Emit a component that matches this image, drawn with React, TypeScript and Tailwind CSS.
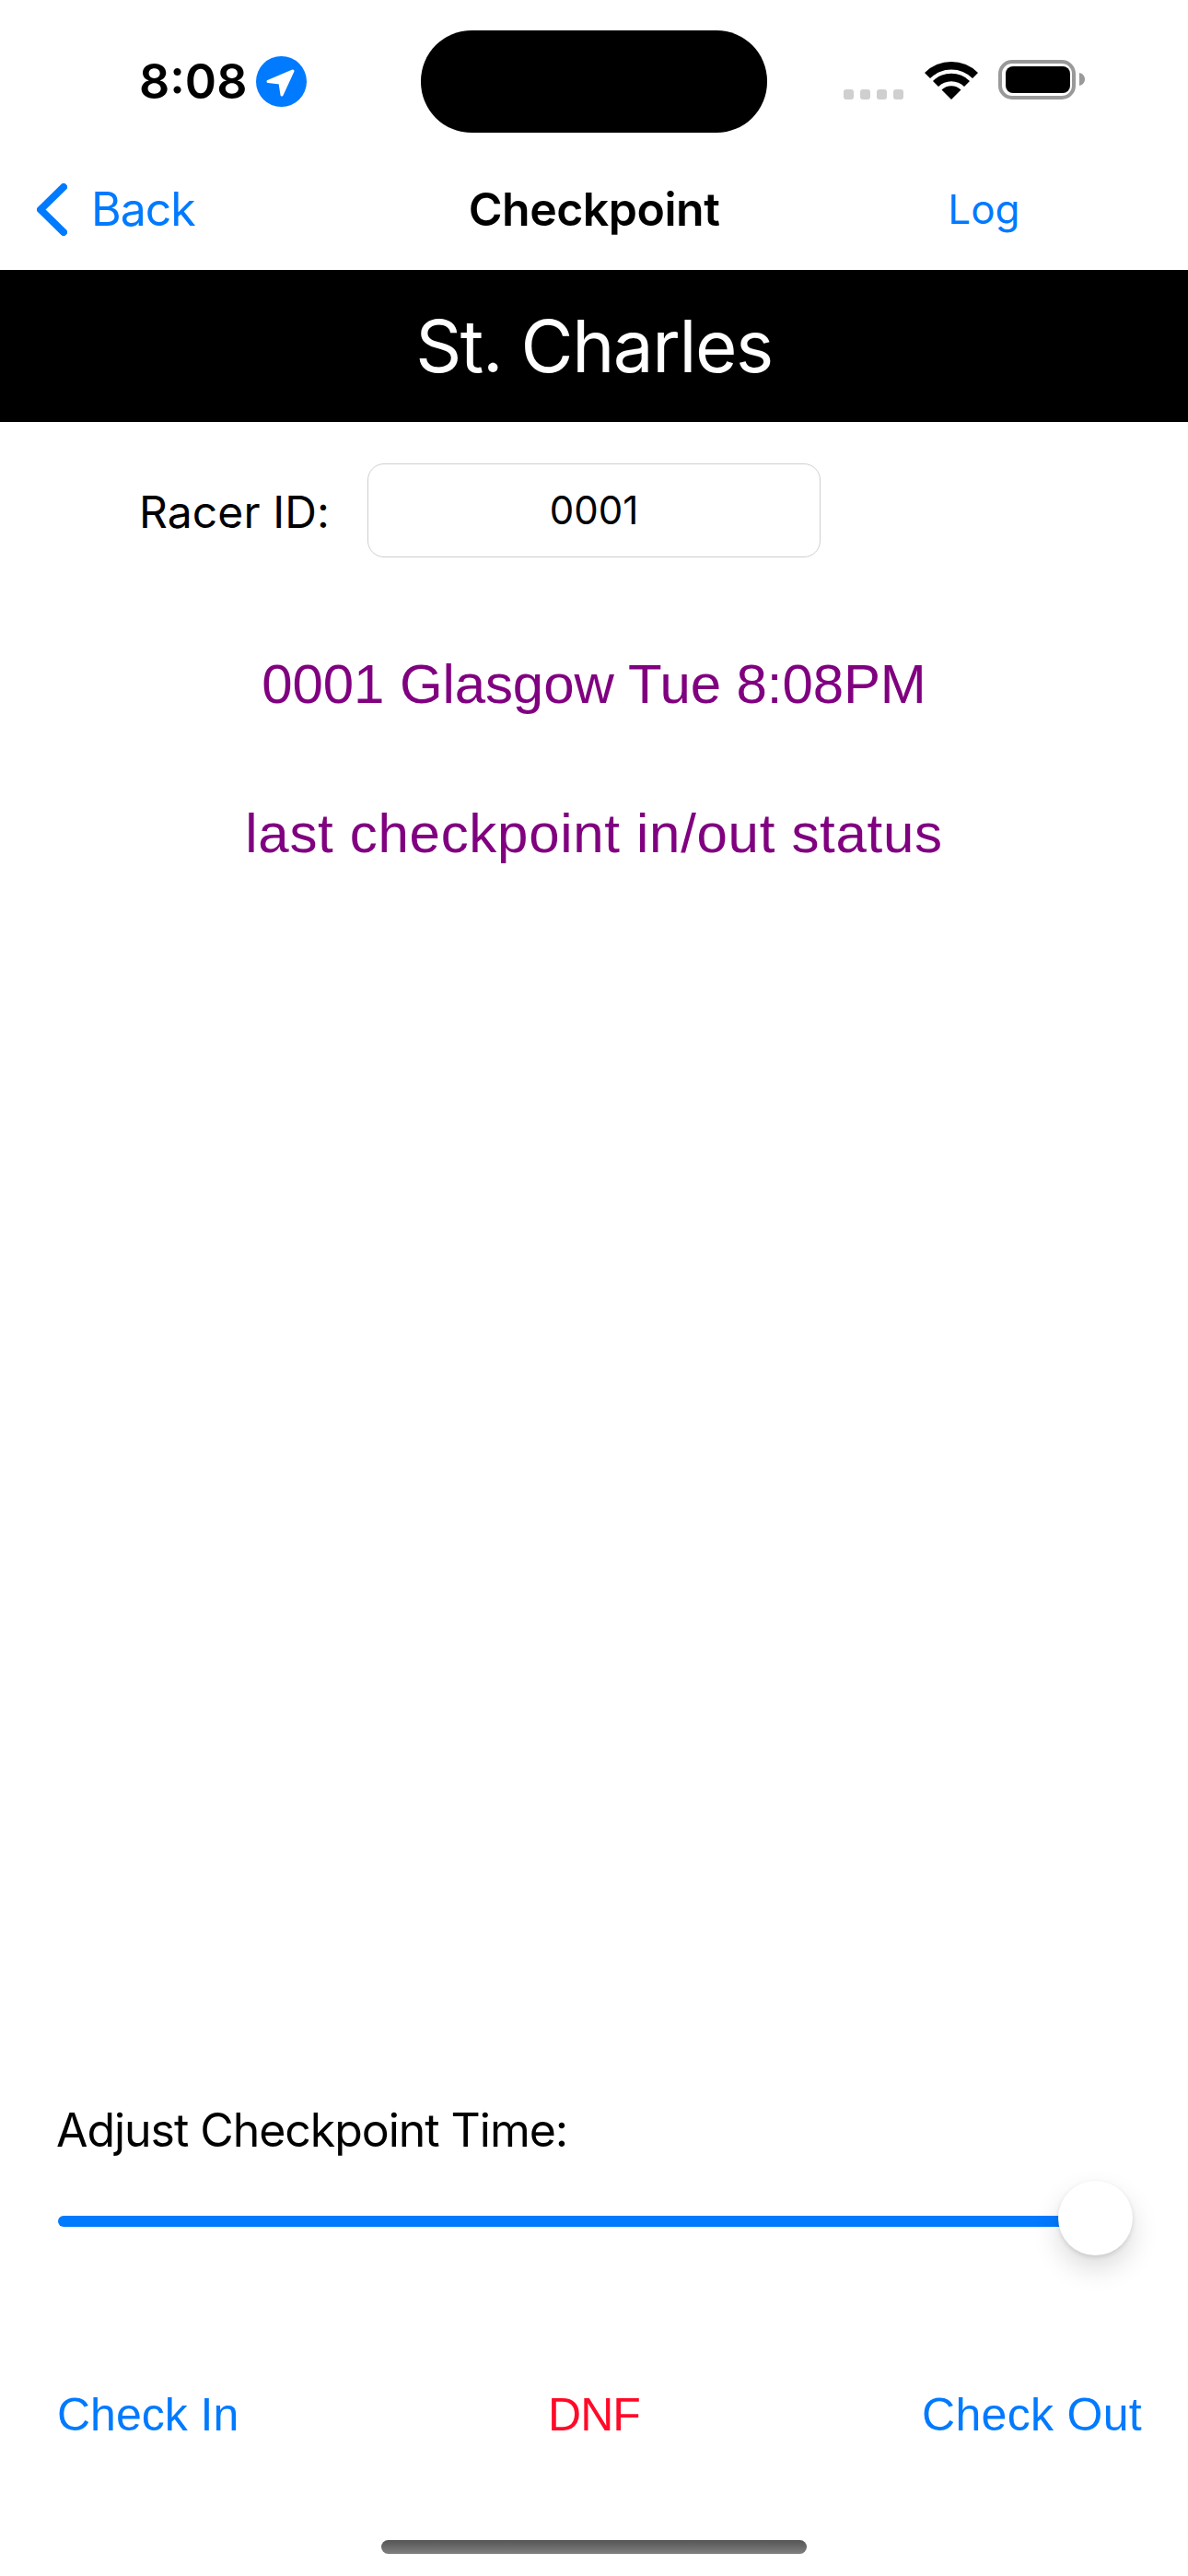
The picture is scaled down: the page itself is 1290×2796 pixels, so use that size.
export default function App() {
  return (
    <div className="w-[1290px] h-[2796px] bg-white flex flex-col font-['Liberation_Sans',Arial,sans-serif] text-black overflow-hidden">
      {/* status bar */}
      <div className="h-[175px] pt-[33px] shrink-0">
        <div className="h-[111px] flex items-center">
          <div className="w-[457px] pl-[151px] flex items-center gap-[12px]">
            <span className="font-['Inter',sans-serif] font-semibold text-[52px] leading-none w-[115px] whitespace-nowrap">8:08</span>
            <svg width="55" height="55" viewBox="0 0 55 55">
              <circle cx="27.5" cy="27.5" r="27.5" fill="#007AFF" />
              <path d="M40 16 L13 27.5 L26 29 L28 42 Z" fill="#fff" stroke="#fff" strokeWidth="3" strokeLinejoin="round" />
            </svg>
          </div>
          <div className="w-[376px] h-[111px] bg-black rounded-[55px]" />
          <div className="ml-[83px] mb-[4px] flex items-end">
            <div className="flex gap-[7px]">
              <div className="w-[11px] h-[11px] rounded-[3px] bg-[#cfcfcf]" />
              <div className="w-[11px] h-[11px] rounded-[3px] bg-[#cfcfcf]" />
              <div className="w-[11px] h-[11px] rounded-[3px] bg-[#cfcfcf]" />
              <div className="w-[11px] h-[11px] rounded-[3px] bg-[#cfcfcf]" />
            </div>
            <svg className="ml-[23px]" width="58" height="42" viewBox="0 0 58 42">
              <path d="M0 13 A41 41 0 0 1 58 13 L52 19 A32.5 32.5 0 0 0 6 19 Z" fill="#000" />
              <path d="M9 22 A28.3 28.3 0 0 1 49 22 L43 28 A19.8 19.8 0 0 0 15 28 Z" fill="#000" />
              <path d="M18.5 31.5 A14.85 14.85 0 0 1 39.5 31.5 L29 42 Z" fill="#000" />
            </svg>
            <svg className="ml-[22px]" width="94" height="43" viewBox="0 0 94 43">
              <rect x="2" y="2" width="80" height="39" rx="13" fill="none" stroke="#999" strokeWidth="4" />
              <rect x="8" y="7" width="70" height="29" rx="8" fill="#000" />
              <path d="M88 14 C92 15 94 18 94 21 C94 24 92 27 88 28 Z" fill="#999" />
            </svg>
          </div>
        </div>
      </div>

      {/* nav bar */}
      <div className="h-[118px] shrink-0 pb-[14px] grid grid-cols-[1fr_auto_1fr] items-center font-['Inter',sans-serif]">
        <div className="pl-[40px] flex items-center gap-[26px] text-[#007AFF] text-[50px] leading-none tracking-[-1px]">
          <svg width="33" height="57" viewBox="0 0 33 57" fill="none" stroke="#007AFF" strokeWidth="8" strokeLinecap="round" strokeLinejoin="round">
            <path d="M29 4 L4 28.5 L29 53" />
          </svg>
          <span>Back</span>
        </div>
        <div className="font-semibold text-[50px] leading-none tracking-[-0.5px]">Checkpoint</div>
        <div className="pl-[248px] text-[#007AFF] text-[44px] leading-none">Log</div>
      </div>

      {/* checkpoint name */}
      <div className="h-[165px] shrink-0 bg-black text-white text-[78px] leading-none flex items-center justify-center font-['Inter',sans-serif] tracking-[-1.4px]">St. Charles</div>

      {/* racer id */}
      <div className="mt-[45px] pl-[151px] flex items-center gap-[45px] font-['Inter',sans-serif]">
        <span className="mt-[3px] w-[203px] text-[48px] leading-none whitespace-nowrap tracking-[0.1px]">Racer ID:</span>
        <div className="w-[492px] h-[102px] border border-[#cfcfcf] rounded-[18px] flex items-center justify-center text-[42px] leading-none">0001</div>
      </div>

      {/* racer status */}
      <div className="mt-[108px] text-center text-[60px] leading-none text-[#800080] tracking-[-0.1px]">0001 Glasgow Tue 8:08PM</div>
      <div className="mt-[102px] text-center text-[60px] leading-none text-[#800080] tracking-[0.7px]">last checkpoint in/out status</div>

      {/* bottom controls */}
      <div className="mt-auto">
        <div className="pl-[61px] text-[50px] leading-none font-['Inter',sans-serif] tracking-[-1.05px]">Adjust Checkpoint Time:</div>
        <div className="relative mt-[30px] ml-[63px] w-[1167px] h-[81px] flex items-center">
          <div className="mt-[7px] w-[1100px] h-[12px] rounded-full bg-[#007AFF]" />
          <div className="absolute right-0 top-0 w-[81px] h-[81px] rounded-full bg-white shadow-[0_14px_30px_rgba(0,0,0,0.14),0_2px_5px_rgba(0,0,0,0.12)]" />
        </div>
        <div className="mt-[148px] grid grid-cols-[1fr_auto_1fr] text-[50px] leading-none">
          <div className="pl-[62px] text-[#007AFF]">Check In</div>
          <div className="text-[#FF0A28] tracking-[-1px]">DNF</div>
          <div className="pr-[50px] text-right text-[#007AFF] tracking-[0.3px]">Check Out</div>
        </div>
        <div className="mt-[111px] mb-[24px] mx-auto w-[462px] h-[15px] rounded-[8px] bg-gradient-to-b from-[#555555] to-[#808080]" />
      </div>
    </div>
  );
}
